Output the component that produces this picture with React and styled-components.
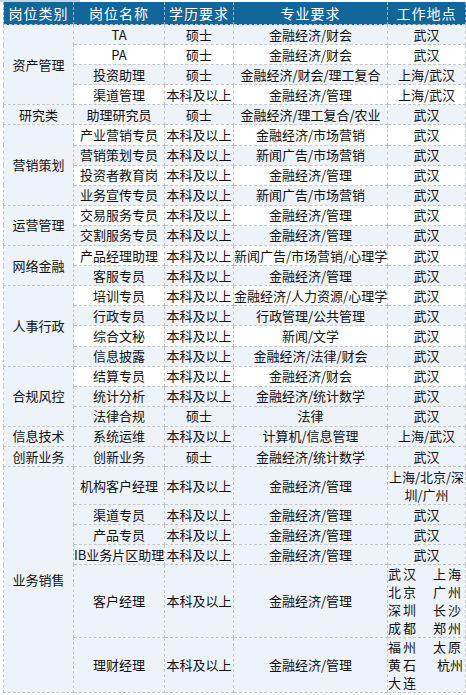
import React from 'react';
import styled, { createGlobalStyle } from 'styled-components';

const GlobalStyle = createGlobalStyle`
  html, body {
    margin: 0;
    padding: 0;
    background: #ffffff;
  }
  body {
    font-family: "Noto Sans CJK SC", "DejaVu Sans", sans-serif;
    color: #111;
  }
`;

const Page = styled.div`
  padding: 2px 0 0 3px;
  width: 466px;
  box-sizing: border-box;
  position: relative;
`;

const TopStrip = styled.div`
  position: absolute;
  left: 0;
  top: 0;
  width: 80px;
  height: 2px;
  background: #c9d3df;
`;

const Table = styled.table`
  width: 462px;
  border-collapse: collapse;
  table-layout: fixed;
  font-size: 13px;
`;

const HeadCell = styled.th`
  background: #13669a;
  color: #ffffff;
  font-weight: normal;
  font-size: 14px;
  height: 22px;
  padding: 0;
  line-height: 22px;
  text-align: center;
  letter-spacing: 1px;
  border-left: 1px dashed #8fb0cc;
  border-right: 1px dashed #8fb0cc;
  white-space: nowrap;
`;

const Row = styled.tr`
  height: ${(p) => p.$h || 20.1}px;
  background: ${(p) => (p.$light ? '#eef2f9' : '#ffffff')};
`;

const Cell = styled.td`
  border: 1px dashed #c3c6cc;
  padding: 0;
  text-align: center;
  vertical-align: middle;
  line-height: 18px;
  white-space: nowrap;
  overflow: hidden;
`;

const GroupCell = styled(Cell)`
  background: #eef2f9;
`;

const WrapCell = styled(Cell)`
  white-space: normal;
`;

const CityList = styled.div`
  display: flex;
  flex-direction: column;
  text-align: left;
`;

const CityLine = styled.div`
  display: flex;
  justify-content: space-between;
  padding-right: 2px;
  line-height: 18px;
`;

const CityLeft = styled.span`
  letter-spacing: 2px;
`;

const CityRight = styled.span`
  letter-spacing: ${(p) => (p.$tight ? 0 : 2)}px;
`;

const groups = [
  {
    name: '资产管理',
    rows: [
      ['TA', '硕士', '金融经济/财会', '武汉'],
      ['PA', '硕士', '金融经济/财会', '武汉'],
      ['投资助理', '硕士', '金融经济/财会/理工复合', '上海/武汉'],
      ['渠道管理', '本科及以上', '金融经济/管理', '上海/武汉'],
    ],
  },
  {
    name: '研究类',
    rows: [['助理研究员', '硕士', '金融经济/理工复合/农业', '武汉']],
  },
  {
    name: '营销策划',
    rows: [
      ['产业营销专员', '本科及以上', '金融经济/市场营销', '武汉'],
      ['营销策划专员', '本科及以上', '新闻广告/市场营销', '武汉'],
      ['投资者教育岗', '本科及以上', '金融经济/管理', '武汉'],
      ['业务宣传专员', '本科及以上', '新闻广告/市场营销', '武汉'],
    ],
  },
  {
    name: '运营管理',
    rows: [
      ['交易服务专员', '本科及以上', '金融经济/管理', '武汉'],
      ['交割服务专员', '本科及以上', '金融经济/管理', '武汉'],
    ],
  },
  {
    name: '网络金融',
    rows: [
      ['产品经理助理', '本科及以上', '新闻广告/市场营销/心理学', '武汉'],
      ['客服专员', '本科及以上', '金融经济/管理', '武汉'],
    ],
  },
  {
    name: '人事行政',
    rows: [
      ['培训专员', '本科及以上', '金融经济/人力资源/心理学', '武汉'],
      ['行政专员', '本科及以上', '行政管理/公共管理', '武汉'],
      ['综合文秘', '本科及以上', '新闻/文学', '武汉'],
      ['信息披露', '本科及以上', '金融经济/法律/财会', '武汉'],
    ],
  },
  {
    name: '合规风控',
    rows: [
      ['结算专员', '本科及以上', '金融经济/财会', '武汉'],
      ['统计分析', '本科及以上', '金融经济/统计数学', '武汉'],
      ['法律合规', '硕士', '法律', '武汉'],
    ],
  },
  {
    name: '信息技术',
    rows: [['系统运维', '本科及以上', '计算机/信息管理', '上海/武汉']],
  },
  {
    name: '创新业务',
    rows: [['创新业务', '硕士', '金融经济/统计数学', '武汉']],
  },
  {
    name: '业务销售',
    rows: [
      ['机构客户经理', '本科及以上', '金融经济/管理', 'wrap:上海/北京/深圳/广州', 38],
      ['渠道专员', '本科及以上', '金融经济/管理', '武汉'],
      ['产品专员', '本科及以上', '金融经济/管理', '武汉'],
      ['IB业务片区助理', '本科及以上', '金融经济/管理', '武汉'],
      [
        '客户经理',
        '本科及以上',
        '金融经济/管理',
        [
          ['武汉', '上海'],
          ['北京', '广州'],
          ['深圳', '长沙'],
          ['成都', '郑州'],
        ],
        73,
      ],
      [
        '理财经理',
        '本科及以上',
        '金融经济/管理',
        [
          ['福州', '太原'],
          ['黄石', '杭州', true],
          ['大连', ''],
        ],
        55,
      ],
    ],
  },
];

const Place = ({ value }) => {
  if (Array.isArray(value)) {
    return (
      <Cell>
        <CityList>
          {value.map(([a, b, tight]) => (
            <CityLine key={a}>
              <CityLeft>{a}</CityLeft>
              <CityRight $tight={tight}>{b}</CityRight>
            </CityLine>
          ))}
        </CityList>
      </Cell>
    );
  }
  if (value.startsWith('wrap:')) {
    return <WrapCell>{value.slice(5)}</WrapCell>;
  }
  return <Cell>{value}</Cell>;
};

const App = () => {
  let index = 0;
  const body = [];
  groups.forEach((group) => {
    group.rows.forEach((row, i) => {
      index += 1;
      const [title, degree, major, place, h] = row;
      const light = index >= 20 || index % 2 === 1;
      body.push(
        <Row key={title + index} $light={light} $h={h}>
          {i === 0 && <GroupCell rowSpan={group.rows.length}>{group.name}</GroupCell>}
          <Cell>{title}</Cell>
          <Cell>{degree}</Cell>
          <Cell>{major}</Cell>
          <Place value={place} />
        </Row>
      );
    });
  });

  return (
    <>
      <GlobalStyle />
      <Page>
        <TopStrip />
        <Table>
          <colgroup>
            <col style={{ width: 70 }} />
            <col style={{ width: 91 }} />
            <col style={{ width: 69 }} />
            <col style={{ width: 154 }} />
            <col style={{ width: 78 }} />
          </colgroup>
          <thead>
            <tr>
              <HeadCell>岗位类别</HeadCell>
              <HeadCell>岗位名称</HeadCell>
              <HeadCell>学历要求</HeadCell>
              <HeadCell>专业要求</HeadCell>
              <HeadCell>工作地点</HeadCell>
            </tr>
          </thead>
          <tbody>{body}</tbody>
        </Table>
      </Page>
    </>
  );
};

export default App;
